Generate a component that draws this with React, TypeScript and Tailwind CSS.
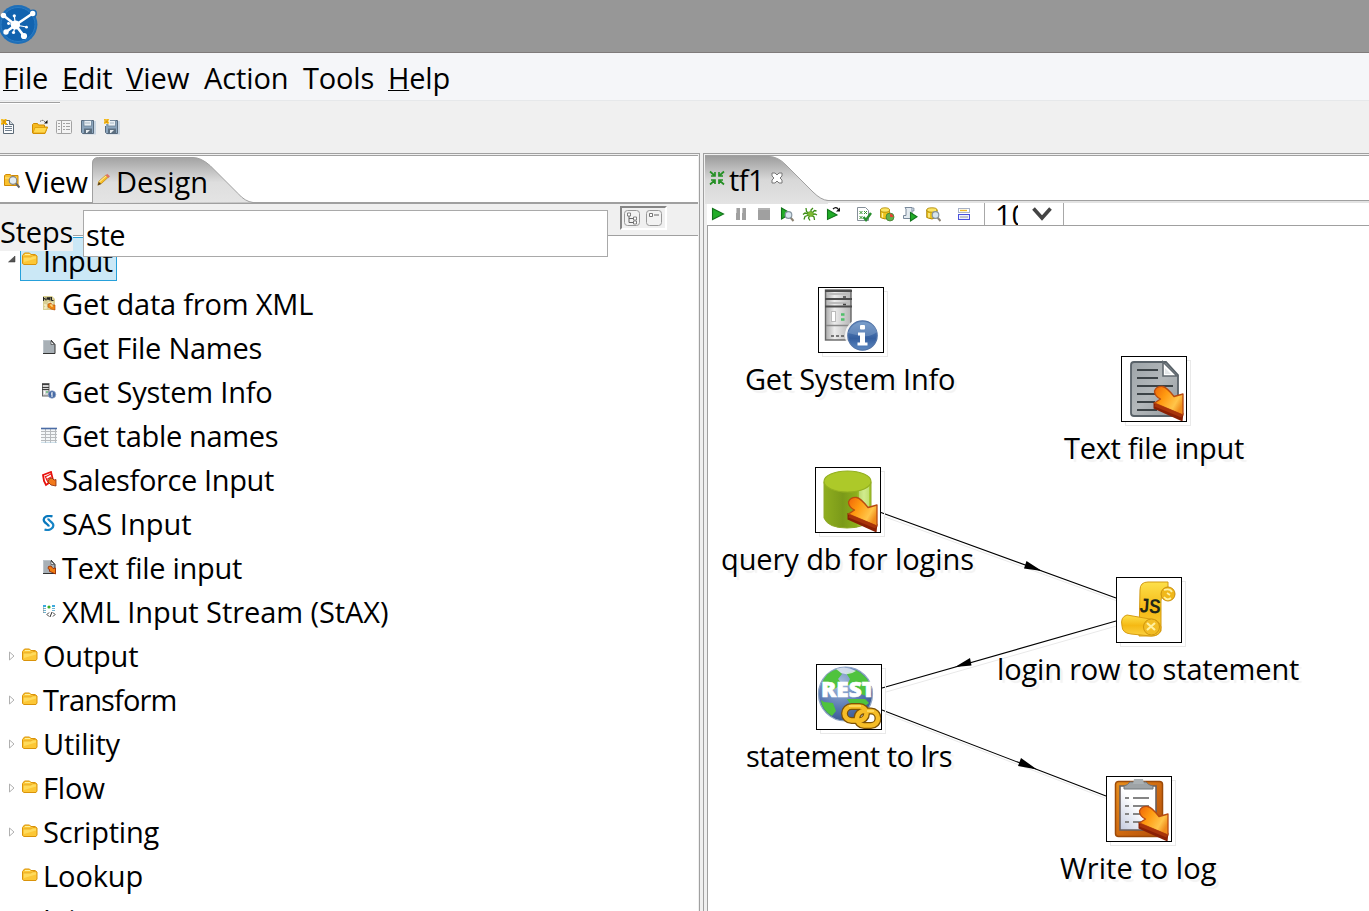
import React from 'react';

type Kids = { children: React.ReactNode };

/* ---------- small icons (16 × 16) ---------- */

function Ico({ children, className = '' }: Kids & { className?: string }) {
  return (
    <svg viewBox="0 0 16 16" className={'block h-4 w-4 shrink-0 ' + className}>
      {children}
    </svg>
  );
}

function Spark() {
  return (
    <g>
      <path d="M0 1h6M0 4.500h6M1 0v6M4.500 0v6" stroke="#f3b200" strokeWidth="1.200" />
      <rect x="1.500" y="1.500" width="3" height="3" fill="#e29a00" />
    </g>
  );
}

function NewFile() {
  return (
    <Ico>
      <path d="M3.500 1.500h6l4 4v9h-10z" fill="#fbfcfd" stroke="#5d6a77" />
      <path d="M9.500 1.500v4h4" fill="#cfd6dc" stroke="#5d6a77" />
      <path d="M5 7.500h7M5 9.500h7M5 11.500h7M5 5.500h3" stroke="#71808f" />
      <g transform="translate(1 0)"><Spark /></g>
    </Ico>
  );
}

function OpenFile() {
  return (
    <Ico>
      <path d="M0.500 14V5.500l1-1h4l1 1.500h6v2H15.500L13 14.500H1z" fill="#f5b921" stroke="#d08c00" />
      <path d="M3 8.500h12.200L13 14H1z" fill="#ffd84e" stroke="#dc9a08" strokeWidth=".8" />
      <path d="M8 2.500q3-2.500 5 .5" fill="none" stroke="#555" strokeDasharray="1.500 .6" />
      <path d="M15.500 1v3.500H12z" fill="#111" />
    </Ico>
  );
}

function Explore() {
  return (
    <Ico>
      <rect x=".5" y="1.500" width="15" height="13" rx="1" fill="#f4f4f4" stroke="#a3a3a3" />
      <path d="M5.500 2v12M2 4.500h2M2 7.500h2M2 10.500h2M7 4.500h2M7 7.500h2M7 10.500h2M10 4.500h4M10 7.500h4M10 10.500h4" stroke="#a3a3a3" />
    </Ico>
  );
}

function Save({ star = false }: { star?: boolean }) {
  return (
    <Ico>
      <path d="M2 2h14v13.500H3z" fill="#c9d6e2" />
      <path d="M1.500 1.500h12v13h-11l-1-1z" fill="#8ba5bd" stroke="#586b7e" />
      <rect x="4" y="1.500" width="7.500" height="5.500" fill="#e9f0f5" stroke="#6c8296" strokeWidth=".8" />
      <path d="M5 4h5" stroke="#a8b8c5" />
      <path d="M4 14V9.500h8V14z" fill="#5c6f80" />
      <path d="M6 14v-3h4l-3 3z" fill="#e8edf1" />
      {star && (
        <g>
          <path d="M0 0h6v5H2v2H0z" fill="#f0f0f0" />
          <g transform="scale(.85)"><Spark /></g>
        </g>
      )}
    </Ico>
  );
}

function Folder() {
  return (
    <Ico>
      <path d="M.5 11.500V3.500l2-2.500h5l1.500 1.500h4l2 1.500v7l-1 1.500H2z" fill="#fcc736" stroke="#d9930a" />
      <path d="M1.500 5h8l1.500-1.500h3" stroke="#e7a51c" fill="none" />
      <path d="M2 5.500h7l1-1h4v2L2 10z" fill="#ffe066" opacity=".8" />
      <path d="M3 2.500h5" stroke="#fff09a" />
    </Ico>
  );
}

function FolderSearch() {
  return (
    <Ico>
      <path d="M.5 12.500V2.500l1.500-1h4l1.500 1H14v10z" fill="#f9c12e" stroke="#d28b05" />
      <path d="M1 5h12" stroke="#ffe98b" />
      <circle cx="9" cy="7.500" r="3.800" fill="#e4edf2" stroke="#858585" strokeWidth="1.200" />
      <path d="M12 10.500l3.500 4" stroke="#666" strokeWidth="2" />
    </Ico>
  );
}

function Pencil() {
  return (
    <Ico className="h-[13px] w-[13px]">
      <path d="M1 15l1.500-5L11 2.500l3 2.500L5.500 13z" fill="#f6bd27" stroke="#b77900" strokeWidth=".8" />
      <path d="M3 11L12 3" stroke="#ffe88a" strokeWidth="1.300" />
      <path d="M10.500 3l2-2L16 4l-2 2z" fill="#dc7468" />
      <path d="M1 15l1.200-3.800L5 13.500z" fill="#4b3a22" />
    </Ico>
  );
}

function InArrow() {
  return <path d="M7.500 7.500L10 7l2 2.500 2.500-.5v6L8 12l1-1-2-1.500z" fill="#ef7e12" stroke="#9c2c05" strokeWidth=".9" />;
}

function XmlIcon() {
  return (
    <Ico>
      <path d="M2 1h9l3 3v11H2z" fill="#d8cf94" />
      <path d="M2.500 2v4M3 3l1.500 2M5 2.500v3M6 5l1-3 1 3 1-3v3.500M10.500 2v3.500h2" stroke="#222" fill="none" />
      <path d="M3 10h2v3H3M7 8h4v5H8" stroke="#f4f0c8" fill="none" strokeWidth="1.500" />
      <path d="M7 9l3-1 1 2 3 0v5l-4-1-3-2z" fill="#ee8914" stroke="#b54708" strokeWidth=".6" />
      <path d="M9 10h2v2" stroke="#fff3a0" fill="none" />
    </Ico>
  );
}

function PageIcon({ arrow = false }: { arrow?: boolean }) {
  return (
    <Ico>
      <path d="M2 1h8l4 4v9.500H2z" fill="#a8b0b6" />
      <path d="M2 1.500h8M2.500 1v13" stroke="#bcc4ca" />
      <path d="M10 1l4 4.500v9H2" fill="none" stroke="#333" />
      <path d="M10 2v3.500h3.500z" fill="#eef0f1" stroke="#333" strokeWidth=".6" />
      {arrow && <InArrow />}
    </Ico>
  );
}

function SysIcon() {
  return (
    <Ico>
      <rect x="1.500" y=".5" width="6.500" height="12.500" fill="#d4d4d4" stroke="#666" />
      <path d="M1 1.500h7M1 4.500h7M1 6.500h7" stroke="#3d3d3d" />
      <path d="M3.500 8v3" stroke="#fff" />
      <path d="M6 8v2" stroke="#35b750" />
      <circle cx="11" cy="11.500" r="3.800" fill="#466aa5" stroke="#9caccc" strokeWidth=".7" />
      <path d="M11 9v5M10 11h1" stroke="#fff" />
    </Ico>
  );
}

function TableIcon() {
  return (
    <Ico>
      <path d="M0 1h16v15H0z" fill="#f4f7f8" />
      <path d="M0 4.500h16M0 7.500h16M0 10.500h16M0 13.500h16M4.500 2v14M9.500 2v14M14.500 2v14" stroke="#b7babd" />
      <path d="M0 1.500h16" stroke="#4b6ca5" strokeWidth="1.600" />
      <path d="M0 16h16" stroke="#a9c8dc" />
    </Ico>
  );
}

function SalesIcon() {
  return (
    <Ico>
      <path d="M2 4l8-3 2 8-7 5-2-4z" fill="#fff" stroke="#e8100c" strokeWidth="1.800" />
      <path d="M4 6l6-3M5 9l5-3M4 5l4 8" stroke="#ef2019" strokeWidth="1.200" />
      <path d="M8 8l3-1 2 2 2-.5V15l-5-1-3-3z" fill="#f2791b" stroke="#8c2a08" strokeWidth=".8" />
    </Ico>
  );
}

function SasIcon() {
  return (
    <Ico>
      <path d="M11.500 1.500C7-.3 1.500 2 3 6c1 2.500 4.500 3.500 5 5.500" fill="none" stroke="#0878bd" strokeWidth="2.200" />
      <path d="M3.500 14.500c5 1.800 10-1.500 8.500-5.500-1-2.500-4.500-3.500-5-5.500" fill="none" stroke="#1684c6" strokeWidth="2.200" />
    </Ico>
  );
}

function StaxIcon() {
  return (
    <Ico>
      <path d="M2 2h3v2H2zM11 2h3v2h-3z" fill="#3ba9dd" />
      <path d="M2 5.500h3M2 7.500h3M2 9.500h3M11 5.500h3M11 7.500h3" stroke="#72b4cf" />
      <circle cx="8" cy="4" r="1.600" fill="#3aae26" />
      <path d="M2.500 4.500v6" stroke="#888" strokeDasharray="1 1" />
      <path d="M8 9.500l-2 2 2 2M12 9.500l2 2-2 2M11 9l-2 5" fill="none" stroke="#333" />
    </Ico>
  );
}

function TreeArrow({ open }: { open: boolean }) {
  return (
    <svg viewBox="0 0 8 10" className="block h-[10px] w-2 shrink-0">
      {open ? (
        <path d="M7 1v6H.5z" fill="#555" stroke="#333" strokeWidth=".5" />
      ) : (
        <path d="M1.500 1v8L6 5z" fill="#fff" stroke="#b0b0b0" />
      )}
    </svg>
  );
}

/* ---------- transformation toolbar icons ---------- */

function Tri({ s = '' }: { s?: string }) {
  return <path d={s || 'M2.500 2.500v11L13.500 8z'} fill="#21ad28" stroke="#11731a" strokeWidth="1.100" />;
}

function Drum() {
  return (
    <g>
      <path d="M1.500 4v7.500q4.500 3 9 0V4z" fill="#ecc31b" stroke="#a47c00" strokeWidth=".8" />
      <ellipse cx="6" cy="4" rx="4.500" ry="2.200" fill="#fbe564" stroke="#ac8500" strokeWidth=".8" />
      <path d="M3.500 7v4.500" stroke="#fff19a" strokeWidth="1.300" />
    </g>
  );
}

function Lens() {
  return (
    <g>
      <path d="M11.500 11.500l3 3.500" stroke="#8c8272" strokeWidth="2" />
      <circle cx="9.500" cy="9" r="3.300" fill="#d7e5ee" stroke="#8795a0" strokeWidth="1.200" />
    </g>
  );
}

function Toolbar() {
  return (
    <div className="flex h-[22px] items-center overflow-hidden bg-white">
      <div className="flex w-[149px] shrink-0 items-center gap-[7px] pl-[3px]">
        <Ico><Tri /></Ico>
        <Ico><path d="M3 2h4v12H3zM9 2h4v12H9z" fill="#a0a0a0" /><path d="M3.500 2v5M9.500 2v5" stroke="#c9c9c9" /></Ico>
        <Ico><path d="M2 2h12v12H2z" fill="#a0a0a0" /><path d="M2 3h12" stroke="#c5c5c5" /></Ico>
        <Ico><Tri s="M2.500 2v11L12 7.500z" /><Lens /></Ico>
        <Ico>
          <path d="M8 8L4.500 5.500 4 2M7 8L3 7 1 8.500M7 9l-4 1.500L2 13.500M8 9l-1.500 3L8 14.500M9 7V4l2-2M10 7l2.500-2.500 2 .5M10 8.500l3-.5 2 1M9 9l3 2 .5 3" fill="none" stroke="#3b8d14" strokeWidth="1.300" />
          <ellipse cx="8.500" cy="8" rx="3" ry="2.600" fill="#7db832" stroke="#4f9a1c" strokeWidth=".6" />
        </Ico>
        <Ico>
          <Tri s="M2.500 3.500v10L12 9z" />
          <path d="M8 3q3-3 5.500.5" stroke="#111" fill="none" strokeWidth="1.200" />
          <path d="M15 1.500v4h-4z" fill="#111" />
        </Ico>
      </div>
      <div className="flex w-[128px] shrink-0 items-center gap-[7px]">
        <Ico>
          <path d="M1.500 1.500h8l3 3v10h-11z" fill="#fff" stroke="#858f99" />
          <path d="M3.500 5l3 3M6.500 5l-3 3M8 5l3 3M11 5L8 8M3.500 10l3 3M6.500 10l-3 3" stroke="#35952e" />
          <path d="M7.500 11l2.500 3 5-7" fill="none" stroke="#278f2d" strokeWidth="2.400" />
        </Ico>
        <Ico><Drum /><circle cx="11" cy="11" r="4" fill="#64af4a" stroke="#39772a" strokeWidth=".7" /><path d="M11 11V7.500q3 .5 3.500 3.500z" fill="#e44332" /></Ico>
        <Ico>
          <path d="M3 1.500h7v9l-2 2H1.500v-3H4V3z" fill="#e4ebf1" stroke="#78889a" />
          <path d="M10 2h2v3h-2" fill="#bdcbd8" stroke="#78889a" strokeWidth=".7" />
          <Tri s="M8.500 6.500v8.500l6.500-4.200z" />
        </Ico>
        <Ico><g transform="scale(1.150 1)"><Drum /></g><g transform="translate(1 0)"><Lens /></g></Ico>
        <div className="pl-2">
          <Ico>
            <rect x="2.500" y="2.500" width="11" height="4" fill="#fff" stroke="#a8b2c6" />
            <path d="M4 4.500h7" stroke="#f1bc25" strokeWidth="1.400" />
            <rect x="2.500" y="8.500" width="11" height="5" fill="#eef0ff" stroke="#4a50dc" />
            <path d="M4 11h8" stroke="#9a9a9a" />
          </Ico>
        </div>
      </div>
      <div className="flex h-[22px] w-[80px] shrink-0 items-center overflow-hidden border-x border-[#a8a8a8] text-black">
        <div className="flex h-[22px] w-[34px] items-start overflow-hidden pl-[10px]">
          <span className="w-[23px] shrink-0 overflow-hidden text-[29px] leading-[24px]">10</span>
        </div>
        <svg viewBox="0 0 20 14" className="ml-[13px] block h-[14px] w-5">
          <path d="M1.500 1.500L10 11l8.500-9.500" fill="none" stroke="#444" strokeWidth="3.600" />
        </svg>
      </div>
    </div>
  );
}

/* ---------- canvas step pictures (64 × 64) ---------- */

function BigArrow() {
  return (
    <g strokeLinejoin="round">
      <path d="M31.500 45l30 11-1 8.500-29-13z" fill="#8a2004" />
      <path d="M32.500 34q2-5 8-4.500 4 .5 11.500 10l9-2.500v21L32.500 46l6-4q-6-3-6-8z" fill="url(#arrowFill)" stroke="#b84a10" strokeWidth="1.300" />
      <path d="M33 48l27 11" stroke="#a8330a" strokeWidth="3" />
    </g>
  );
}

function ServerArt() {
  return (
    <g>
      <rect x="6.500" y="2" width="25.500" height="50" fill="url(#metal)" stroke="#666" strokeWidth="1.400" />
      <path d="M6 3h27M6 11h27M6 18.500h27" stroke="#4c4c4c" strokeWidth="2" />
      <path d="M8 15h23M8 6h23" stroke="#bcbcbc" strokeWidth="2" />
      <path d="M24 9h3M24 16.500h3" stroke="#444" strokeWidth="1.500" />
      <rect x="12.500" y="23.500" width="4" height="10" fill="#fff" stroke="#bbb" />
      <path d="M22 26.500h3.500M22 31.500h3.500" stroke="#4fbf69" strokeWidth="2.500" />
      <path d="M7 37.500h25" stroke="#888" strokeWidth="1.500" />
      <path d="M12 48h3M17 48h3M22 48h3" stroke="#555" strokeWidth="1.600" />
      <circle cx="43.500" cy="47.500" r="17.500" fill="#fff" opacity=".85" />
      <circle cx="43.500" cy="47.500" r="14.700" fill="url(#blueBall)" stroke="#5274a8" strokeWidth="1.200" />
      <path d="M29 45q4-11 15-11t14 10q-6 5-14 4t-15-3z" fill="#9db6d8" opacity=".35" />
      <rect x="41" y="37" width="5" height="4.500" rx="1" fill="#fff" />
      <path d="M39 44.500h7v10h2.500v3H38.500v-3h2.500v-7h-2z" fill="#fff" />
    </g>
  );
}

function TextFileArt() {
  return (
    <g>
      <path d="M12 5h32l12 13v39q0 2-2 2H12q-3 0-3-3V8q0-3 3-3z" fill="url(#slate)" stroke="#596269" strokeWidth="1.800" />
      <path d="M41 5v14h14z" fill="#fff" stroke="#626a70" strokeWidth="1.600" />
      <path d="M43 11v6h6z" fill="#e4e7e9" />
      <path d="M15 13h21M15 21h21M15 29h36M15 37h20M15 45h18M15 53h20" stroke="#3c4347" strokeWidth="1.800" />
      <BigArrow />
    </g>
  );
}

function DbArt() {
  return (
    <g>
      <path d="M8 14v36q4 10 23 10t24-10V14z" fill="url(#dbFill)" stroke="#8fa829" strokeWidth="1" />
      <path d="M43 23q8-2 10-6v28H43z" fill="#dcf3b0" opacity=".5" />
      <ellipse cx="31.500" cy="13.500" rx="23.500" ry="10.500" fill="#adc929" stroke="#94b021" strokeWidth="1.200" />
      <BigArrow />
    </g>
  );
}

function JsArt() {
  return (
    <g>
      <path d="M23 12q0-8 8-8h20v10q-7 0-7 9v30q-3 5-9 5H22z" fill="url(#gold)" stroke="#d39a12" />
      <circle cx="51" cy="16" r="7" fill="#f0b81b" stroke="#c98f0c" />
      <path d="M47 12q6-2 8 2M47 19q3 4 7 1M50 15l3 2" fill="none" stroke="#fff1a1" strokeWidth="1.800" />
      <path d="M10 37q-7 2-5 11 0 7 9 8l20 2q10 0 10-9-2-8-11-8z" fill="url(#gold)" stroke="#d79c10" />
      <circle cx="34.500" cy="49" r="8" fill="#f2bd25" stroke="#cf960e" />
      <path d="M30 45l8 7M30 52l8-7" stroke="#fff0a0" strokeWidth="2.200" />
      <text x="22.500" y="34.500" fontFamily="Liberation Sans" fontWeight="bold" fontSize="20" fill="#222618" transform="rotate(4 30 30)" textLength="21" lengthAdjust="spacingAndGlyphs">JS</text>
    </g>
  );
}

function RestArt() {
  return (
    <g>
      <circle cx="28.500" cy="29" r="27" fill="url(#globe)" stroke="#8fa5c4" strokeWidth="1.200" />
      <path d="M5 18Q10 6 21 4l4 5-4 5 4 5-9 6-11-1zM7 37l9 1 3 8-4 5Q5 45 4 35zM29 8l10-3q12 6 15 18l-5 8-8-3-3-7-8-1 3-6zM30 34h18l4 4-8 6-10-4z" fill="#4fc33e" />
      <path d="M19 4q10-4 20 2-7 5-15 2z" fill="#e7eef5" opacity=".8" />
      <text x="4" y="31.500" fontFamily="Open Sans" fontWeight="800" fontSize="21" fill="#fff" stroke="#fff" strokeWidth=".6" textLength="54" lengthAdjust="spacingAndGlyphs">REST</text>
      <g fill="none" stroke="#7d5206" strokeWidth="7">
        <rect x="27.500" y="41.500" width="22" height="14" rx="7" />
        <rect x="40" y="46" width="21" height="14.500" rx="7" />
      </g>
      <g fill="none" stroke="#f6bd27" strokeWidth="4.500">
        <rect x="27.500" y="41.500" width="22" height="14" rx="7" />
        <rect x="40" y="46" width="21" height="14.500" rx="7" />
      </g>
      <path d="M32 41h12M50 46h7" stroke="#ffe06e" strokeWidth="1.500" />
    </g>
  );
}

function LogArt() {
  return (
    <g>
      <rect x="8.500" y="4.500" width="47" height="55" rx="3" fill="url(#board)" stroke="#9c4a08" strokeWidth="1.500" />
      <path d="M13 9h36v44H13z" fill="url(#sheet)" stroke="#686060" strokeWidth="1.600" />
      <path d="M17 12V9q4-1 6-4h16q2 3 7 4v3z" fill="#9ea3a6" stroke="#70767b" />
      <path d="M26 7l1-5h9l1 5z" fill="#aab0b3" />
      <path d="M18 21h4M18 29h4M18 37h4M18 45h4M26 21h16M26 29h16M26 37h8M26 45h8" stroke="#858585" strokeWidth="2" />
      <BigArrow />
    </g>
  );
}

function Defs() {
  return (
    <defs>
      <linearGradient id="arrowFill" x1="0" y1="0" x2="1" y2=".6">
        <stop offset="0" stopColor="#ef6408" /><stop offset=".4" stopColor="#ff9a10" /><stop offset=".8" stopColor="#ffc54a" /><stop offset="1" stopColor="#f08c1c" />
      </linearGradient>
      <linearGradient id="metal"><stop offset="0" stopColor="#aaa" /><stop offset=".35" stopColor="#ececec" /><stop offset="1" stopColor="#b5b5b5" /></linearGradient>
      <linearGradient id="blueBall" x1="0" y1="0" x2="0" y2="1"><stop offset="0" stopColor="#6a93c6" /><stop offset=".6" stopColor="#355f9f" /><stop offset="1" stopColor="#5f8ac2" /></linearGradient>
      <linearGradient id="slate" x1="0" y1="0" x2="1" y2="1"><stop offset="0" stopColor="#9da4a8" /><stop offset=".5" stopColor="#b3b8bb" /><stop offset="1" stopColor="#92999e" /></linearGradient>
      <linearGradient id="dbFill"><stop offset="0" stopColor="#8fae1f" /><stop offset=".4" stopColor="#7b9a19" /><stop offset=".7" stopColor="#8cb01c" /><stop offset=".85" stopColor="#c7e56d" /><stop offset="1" stopColor="#9cc222" /></linearGradient>
      <linearGradient id="gold" x1="0" y1="0" x2="0" y2="1"><stop offset="0" stopColor="#fde04a" /><stop offset=".5" stopColor="#f5b914" /><stop offset="1" stopColor="#fbd243" /></linearGradient>
      <radialGradient id="globe" cx=".4" cy=".3" r=".8"><stop offset="0" stopColor="#a9c0df" /><stop offset=".6" stopColor="#5575b0" /><stop offset="1" stopColor="#2f4f85" /></radialGradient>
      <linearGradient id="board" x1="0" y1="0" x2="1" y2="1"><stop offset="0" stopColor="#e8901d" /><stop offset=".5" stopColor="#cf6a10" /><stop offset="1" stopColor="#b4500b" /></linearGradient>
      <linearGradient id="sheet" x1="0" y1="1" x2="1" y2="0"><stop offset="0" stopColor="#c3cadf" /><stop offset=".5" stopColor="#fff" /></linearGradient>
    </defs>
  );
}

function Step({ at, art, label, shift }: { at: string; art: React.ReactNode; label: string; shift: string }) {
  return (
    <div className={'absolute flex w-[66px] flex-col ' + at}>
      <div className="relative h-[66px] w-[66px]">
        <div className="absolute left-1 top-1 h-[66px] w-[66px] border border-[#e9e9e9]" />
        <div className="relative h-[66px] w-[66px] border border-black bg-white">
          <svg viewBox="0 0 64 64" className="block h-16 w-16">{art}</svg>
        </div>
      </div>
      <span className={'mt-[6px] h-[40px] w-max whitespace-nowrap leading-[40px] [text-shadow:3px_3px_1px_#f3f3f3] ' + shift}>{label}</span>
    </div>
  );
}

/* ---------- data ---------- */

const leaves = [
  { t: 'Get data from XML', i: <XmlIcon />, c: 'tracking-[-0.2px]' },
  { t: 'Get File Names', i: <PageIcon />, c: 'tracking-[-0.25px]' },
  { t: 'Get System Info', i: <SysIcon />, c: 'tracking-[-0.2px]' },
  { t: 'Get table names', i: <TableIcon />, c: 'tracking-[-0.35px]' },
  { t: 'Salesforce Input', i: <SalesIcon />, c: 'tracking-[-0.38px]' },
  { t: 'SAS Input', i: <SasIcon />, c: 'tracking-[0.03px]' },
  { t: 'Text file input', i: <PageIcon arrow />, c: 'tracking-[-0.3px]' },
  { t: 'XML Input Stream (StAX)', i: <StaxIcon />, c: 'tracking-[-0.07px]' },
];

const folders = [
  { t: 'Output', c: 'tracking-[-0.2px]', a: true },
  { t: 'Transform', c: 'tracking-[-0.9px]', a: true },
  { t: 'Utility', c: 'tracking-[-0.2px]', a: true },
  { t: 'Flow', c: 'tracking-[-0.1px]', a: true },
  { t: 'Scripting', c: 'tracking-[-0.2px]', a: true },
  { t: 'Lookup', c: 'tracking-[-0.1px]', a: false },
  { t: 'Joins', c: '', a: false },
];

const menu = [
  { k: 'F', r: 'ile', c: 'w-[59px] tracking-[-0.2px]' },
  { k: 'E', r: 'dit', c: 'w-[64px] tracking-[-0.3px]' },
  { k: 'V', r: 'iew', c: 'w-[78px]' },
  { k: '', r: 'Action', c: 'w-[99px] tracking-[-0.1px]' },
  { k: '', r: 'Tools', c: 'w-[85px] tracking-[-0.2px]' },
  { k: 'H', r: 'elp', c: 'w-[80px] tracking-[-0.2px]' },
];

export default function App() {
  return (
    <div className="flex h-[911px] w-[1369px] flex-col overflow-hidden bg-[#f0f0f0] text-[29px] text-black font-['Open_Sans','Noto_Sans',sans-serif]">
      <svg className="absolute h-0 w-0"><Defs /></svg>

      <header className="flex h-[53px] shrink-0 border-b border-[#7f7b7b] bg-[#979797]">
        <svg viewBox="0 0 38 48" className="block h-12 w-[38px]">
          <circle cx="18" cy="24.500" r="19.400" fill="#1f6fb8" />
          <circle cx="18" cy="24.500" r="17" fill="#1263af" stroke="#2b7cc4" />
          <circle cx="33" cy="13.500" r="4" fill="#1b69b2" />
          <g stroke="#fff" strokeLinecap="round">
            <path d="M15.500 25L3.500 15.500M15.500 25L32.500 13.500M15.500 25L6 32M15.500 25L24 36" strokeWidth="2.600" />
            <path d="M15.500 25L14.300 16M15.500 25l11 2M15.500 25L13.500 32.500M15.500 25l-7-1.500" strokeWidth="1.200" />
          </g>
          <g fill="#fff">
            <circle cx="15.500" cy="25" r="4.600" /><circle cx="3.500" cy="15.500" r="2.700" /><circle cx="32.700" cy="13.500" r="2.700" />
            <circle cx="6" cy="32" r="2.700" /><circle cx="24" cy="36" r="3.100" /><circle cx="14.300" cy="15.800" r="1.600" />
            <circle cx="26.500" cy="27.200" r="1.400" /><circle cx="13.500" cy="32.500" r="1.600" /><circle cx="8.500" cy="23.500" r="1.400" />
          </g>
        </svg>
      </header>

      <nav className="flex h-12 shrink-0 border-b border-[#e6e8ea] bg-[#f5f6f9] pl-[3px] leading-[50px]">
        {menu.map((m) => (
          <span key={m.r} className={'shrink-0 ' + m.c}>
            <span className="underline decoration-1 underline-offset-[1px] [text-decoration-skip-ink:none]">{m.k}</span>{m.r}
          </span>
        ))}
      </nav>

      <div className="flex h-[52px] shrink-0 flex-col">
        <div className="mt-px h-[2px] w-[60px] border-t border-[#a0a0a0] bg-white" />
        <div className="mt-[15px] flex">
          <NewFile />
          <div className="ml-4 flex gap-2">
            <OpenFile /><Explore /><Save /><Save star />
          </div>
        </div>
      </div>

      <main className="flex min-h-0 flex-1">
        {/* left: step palette */}
        <section className="flex w-[700px] shrink-0 flex-col border-r border-t border-[#a0a0a0] pr-px pt-px">
          <div className="flex h-[49px] shrink-0 border-b-2 border-t border-[#a0a0a0] bg-white">
            <div className="flex w-[91px] shrink-0 items-start pl-1">
              <span className="pt-[17px]"><FolderSearch /></span>
              <span className="ml-[5px] leading-[52px] tracking-[-0.1px]">View</span>
            </div>
            <div className="relative flex w-[162px] shrink-0">
              <svg viewBox="0 0 162 46" className="absolute left-0 top-px h-[46px] w-[162px]">
                <defs>
                  <linearGradient id="tabL" x1="0" y1="0" x2="0" y2="1"><stop offset="0" stopColor="#a2a2a2" /><stop offset=".55" stopColor="#dedede" /><stop offset="1" stopColor="#e4e4e4" /></linearGradient>
                </defs>
                <path d="M1.500 46V6q0-5.500 6-5.500H102q8 0 17 8l28 28q7 8 15 9" fill="url(#tabL)" stroke="#a0a0a0" />
              </svg>
              <span className="relative ml-[6px] mt-[17px]"><Pencil /></span>
              <span className="relative ml-[6px] leading-[52px]">Design</span>
            </div>
          </div>

          <div className="relative flex h-[32px] shrink-0 border-b border-[#a0a0a0]">
            <label className="absolute left-0 top-0 z-10 h-[47px] w-[73px] bg-[#f0f0f0] leading-[55px] tracking-[-0.2px]">Steps</label>
            <div className="absolute left-[83px] top-[6px] z-10 h-[47px] w-[525px] border border-[#a9a9a9] bg-white pl-[2px] leading-[48px] tracking-[-0.4px]">ste</div>
            <div className="ml-[620px] mt-[2px] flex h-6 w-[47px] items-center gap-[6px] border-2 border-b-white border-l-[#858585] border-r-white border-t-[#858585] pl-[2px]">
              <svg viewBox="0 0 16 16" className="block h-4 w-4">
                <rect x=".5" y=".5" width="15" height="15" rx="3" fill="#f2f2f2" stroke="#999" />
                <path d="M5 5v7.500h5M5 8.500h5" fill="none" stroke="#666" />
                <path d="M3.500 3h3v3h-3zM9.500 7h3v3h-3zM9.500 11h3v3h-3z" fill="#fff" stroke="#666" strokeWidth=".8" />
              </svg>
              <svg viewBox="0 0 16 16" className="block h-4 w-4">
                <rect x=".5" y=".5" width="15" height="15" rx="3" fill="#f2f2f2" stroke="#999" />
                <path d="M3.500 3.500h3v3h-3z" fill="#fff" stroke="#666" strokeWidth=".9" />
                <path d="M8 5h5" stroke="#666" />
              </svg>
            </div>
          </div>

          <div className="flex min-h-0 flex-1 flex-col overflow-hidden bg-white pt-px leading-[46px]">
            <div className="flex h-11 shrink-0 pl-2">
              <div className="mt-[18px] w-3"><TreeArrow open /></div>
              <div className="flex h-11 w-[97px] border border-[#26a0da] bg-[#cbe8f6] pl-[1px]">
                <span className="mt-[14px]"><Folder /></span>
                <span className="ml-[5px] tracking-[-0.4px]">Input</span>
              </div>
            </div>
            {leaves.map((l) => (
              <div key={l.t} className="flex h-11 shrink-0 pl-[41px]">
                <span className="mt-[14px]">{l.i}</span>
                <span className={'ml-[5px] ' + l.c}>{l.t}</span>
              </div>
            ))}
            {folders.map((f) => (
              <div key={f.t} className="flex h-11 shrink-0 pl-2">
                <div className="mt-[18px] w-[14px]">{f.a && <TreeArrow open={false} />}</div>
                <span className="mt-[15px]"><Folder /></span>
                <span className={'ml-[5px] ' + f.c}>{f.t}</span>
              </div>
            ))}
          </div>
        </section>

        {/* right: transformation editor */}
        <section className="ml-[3px] flex min-w-0 flex-1 flex-col border-l border-t border-[#a0a0a0] pl-px pt-px">
          <div className="flex h-[46px] shrink-0 border-b border-[#a0a0a0] border-t bg-white">
            <div className="relative flex w-[130px] shrink-0">
              <svg viewBox="0 0 130 48" className="absolute left-0 top-0 h-12 w-[130px]">
                <defs>
                  <linearGradient id="tabR" x1="0" y1="0" x2="0" y2="1"><stop offset="0" stopColor="#9c9c9c" /><stop offset=".5" stopColor="#d8d8d8" /><stop offset="1" stopColor="#e3e3e3" /></linearGradient>
                </defs>
                <path d="M0 48V0H64q9 1 17 9l27 27q8 8 15 8.500l0 3.500z" fill="url(#tabR)" />
                <path d="M64 .5q9 0 17 8.500l27 27q8 8 15 8.500" fill="none" stroke="#a0a0a0" />
              </svg>
              <svg viewBox="0 0 16 16" className="relative ml-[4px] mt-[14px] block h-4 w-4">
                <path d="M1 1.500l4.500 4M2 6h4V2M15 1.500l-4.500 4M10 2v4h4M1 14.500l4.500-4M2 10h4v4M15 14.500l-4.500-4M14 10h-4v4" fill="none" stroke="#259025" strokeWidth="1.700" />
              </svg>
              <span className="relative ml-1 leading-[48px] tracking-[-0.5px]">tf1</span>
              <svg viewBox="0 0 12 12" className="relative ml-[7px] mt-[16px] block h-3 w-3">
                <path d="M1 1h3l2 2 2-2h3v3L9 6l2 2v3H8L6 9l-2 2H1V8l2-2-2-2z" fill="#fff" stroke="#777" />
              </svg>
            </div>
          </div>
          <div className="h-[2px] shrink-0 bg-[#e3e3e3]" />
          <div className="flex min-h-0 flex-1 flex-col pl-[2px]">
            <Toolbar />
            <div className="relative min-h-0 flex-1 overflow-hidden border-l border-t border-[#a0a0a0] bg-white">
              <svg viewBox="708 226 661 685" className="absolute left-0 top-0 h-[685px] w-[661px]">
                <g fill="none" stroke="#e9e9e9" transform="translate(4 4)">
                  <path d="M881 513L1116 598M1116 621L882 688M882 710L1106 796" />
                </g>
                <g fill="none" stroke="#000" strokeWidth="1.100">
                  <path d="M881 512.500L1116 598M1116 621L882 688M882 710L1106 796" />
                </g>
                <path d="M1042 571l-18-2.500 2.500-7.500zM955 667l16.500-1.500-1.500-7.500zM1037 769.500l-19-3.500 3-8z" fill="#000" />
              </svg>
              <Step at="left-[110px] top-[61px]" art={<ServerArt />} label="Get System Info" shift="-ml-[73px] tracking-[-0.22px]" />
              <Step at="left-[413px] top-[130px]" art={<TextFileArt />} label="Text file input" shift="-ml-[57px] tracking-[-0.3px]" />
              <Step at="left-[107px] top-[241px]" art={<DbArt />} label="query db for logins" shift="-ml-[94px] tracking-[-0.1px]" />
              <Step at="left-[408px] top-[351px]" art={<JsArt />} label="login row to statement" shift="-ml-[119px] tracking-[-0.17px]" />
              <Step at="left-[108px] top-[438px]" art={<RestArt />} label="statement to lrs" shift="-ml-[70px] tracking-[-0.5px]" />
              <Step at="left-[398px] top-[550px]" art={<LogArt />} label="Write to log" shift="-ml-[46px] tracking-[0.05px]" />
            </div>
          </div>
        </section>
      </main>
    </div>
  );
}
